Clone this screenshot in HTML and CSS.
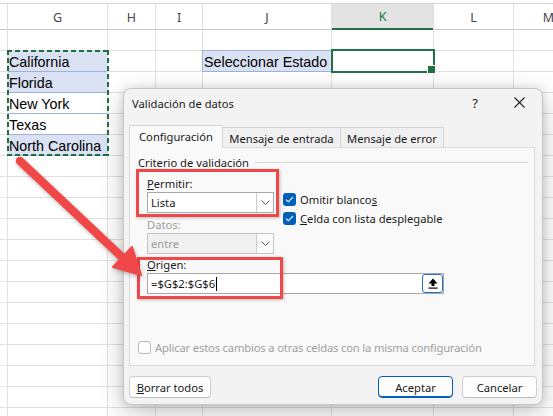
FILE: index.html
```html
<!DOCTYPE html>
<html lang="es">
<head>
<meta charset="utf-8">
<title>Validación de datos</title>
<link rel="stylesheet" href="styles.css">
</head>
<body>
<div class="sheet">
  <div class="col c1"><div class="hd"></div></div>
  <div class="col c2"><div class="hd">G</div></div>
  <div class="col c3"><div class="hd">H</div></div>
  <div class="col c4"><div class="hd">I</div></div>
  <div class="col c5"><div class="hd">J</div></div>
  <div class="col c6"><div class="hd hd-active">K</div></div>
  <div class="col c7"><div class="hd">L</div></div>
  <div class="col c8"><div class="hd hd-edge">M</div></div>

  <div class="cell cg r3 fill">California</div>
  <div class="cell cg r4 fill">Florida</div>
  <div class="cell cg r5">New York</div>
  <div class="cell cg r6">Texas</div>
  <div class="cell cg r7 fill">North Carolina</div>
  <div class="ants"></div>

  <div class="sel-label">Seleccionar Estado</div>
  <div class="active-cell"></div>
</div>

<div class="dialog">
  <div class="titlebar">
    <div class="title">Validación de datos</div>
    <div class="tbtn">?</div>
    <div class="tbtn close">
      <svg width="11" height="11" viewBox="0 0 11 11"><path d="M0.5 0.5 L10.5 10.5 M10.5 0.5 L0.5 10.5" stroke="#222" stroke-width="1.1" fill="none"/></svg>
    </div>
  </div>
  <div class="tabs">
    <div class="tab active t1">Configuración</div>
    <div class="tab t2">Mensaje de entrada</div>
    <div class="tab t3">Mensaje de error</div>
  </div>
  <div class="panel">
    <div class="group-title"><span>Criterio de validación</span><span class="rule"></span></div>
    <div class="form">
      <div class="top-row">
        <div class="left">
          <div class="lbl"><u>P</u>ermitir:</div>
          <div class="select">
            <span>Lista</span>
            <span class="dd"><svg width="9" height="5" viewBox="0 0 9 5"><path d="M0.5 0.5 L4.5 4.5 L8.5 0.5" stroke="#5a5a5a" stroke-width="1" fill="none"/></svg></span>
          </div>
          <div class="lbl dis lbl-gap">Datos:</div>
          <div class="select disabled">
            <span>entre</span>
            <span class="dd"><svg width="9" height="5" viewBox="0 0 9 5"><path d="M0.5 0.5 L4.5 4.5 L8.5 0.5" stroke="#5a5a5a" stroke-width="1" fill="none"/></svg></span>
          </div>
        </div>
        <div class="checks">
          <div class="check"><span class="box on"><svg width="9" height="7" viewBox="0 0 9 7"><path d="M1 3.6 L3.3 5.8 L8 1" stroke="#fff" stroke-width="1.1" fill="none"/></svg></span><span>Omitir blanco<u>s</u></span></div>
          <div class="check"><span class="box on"><svg width="9" height="7" viewBox="0 0 9 7"><path d="M1 3.6 L3.3 5.8 L8 1" stroke="#fff" stroke-width="1.1" fill="none"/></svg></span><span><u>C</u>elda con lista desplegable</span></div>
        </div>
      </div>
      <div class="lbl lbl-gap2"><u>O</u>rigen:</div>
      <div class="refinput">
        <span>=$G$2:$G$6</span><span class="caret"></span>
        <span class="refbtn"><svg width="10" height="11" viewBox="0 0 10 11"><path d="M5 0.5 L9.5 5.5 L6.5 5.5 L6.5 8 L3.5 8 L3.5 5.5 L0.5 5.5 Z" fill="#000"/><rect x="0.5" y="9.5" width="9" height="1.2" fill="#000"/></svg></span>
      </div>
    </div>
    <div class="apply"><span class="box off"></span><span class="apply-text">Aplicar estos cambios a otras celdas con la misma configuración</span></div>
  </div>
  <div class="buttons">
    <div class="btn b-clear"><span><u>B</u>orrar todos</span></div>
    <div class="spacer"></div>
    <div class="btn primary">Aceptar</div>
    <div class="btn b-cancel">Cancelar</div>
  </div>
  <div class="mark mark1"></div>
  <div class="mark mark2"></div>
</div>

<svg class="arrow" width="553" height="416" viewBox="0 0 553 416">
  <line x1="20" y1="161" x2="124" y2="259" stroke="#f04848" stroke-width="8.5" stroke-linecap="round"/>
  <polygon points="141,275 113,267 132,247" fill="#f04848" stroke="#f04848" stroke-width="2" stroke-linejoin="round"/>
</svg>
</body>
</html>
```

FILE: styles.css
```css
* { box-sizing: border-box; }
html, body { margin: 0; padding: 0; }
body {
  width: 553px;
  height: 416px;
  overflow: hidden;
  position: relative;
  background: #fff;
  font-family: "Liberation Sans", Arial, sans-serif;
}

/* ---------- spreadsheet ---------- */
.sheet {
  margin-top: 3px;
  border-top: 1px solid #d4d4d4;
  display: grid;
  grid-template-columns: 8px 100px 48px 47px 129px 102px 80px 40px;
  grid-template-rows: 26px repeat(19, 21px);
  background-image: linear-gradient(to bottom, transparent 20px, #e1e1e1 20px);
  background-size: 100% 21px;
  background-position: 0 26px;
  font-size: 14.3px;
  color: #000;
}
.col { grid-row: 1 / -1; border-right: 1px solid #e1e1e1; }
.c1 { grid-column: 1; }
.c2 { grid-column: 2; }
.c3 { grid-column: 3; }
.c4 { grid-column: 4; }
.c5 { grid-column: 5; }
.c6 { grid-column: 6; }
.c7 { grid-column: 7; }
.c8 { grid-column: 8; border-right: 0; }
.hd {
  height: 26px;
  background: #fff;
  border-bottom: 1px solid #c8c8c8;
  display: flex;
  align-items: center;
  justify-content: center;
  font-family: "Noto Sans", sans-serif;
  font-size: 12.5px;
  color: #444;
  padding-top: 1px;
}
.hd-edge { justify-content: flex-end; padding-right: 0; }
.hd-active {
  background: #e3e3e3;
  border-bottom: 2px solid #217346;
  color: #217346;
}
.cell {
  display: flex;
  align-items: center;
  padding: 1px 0 0 1px;
  margin-right: 1px;
  border-bottom: 1px solid #9db3df;
  white-space: nowrap;
  background: #fff;
}
.cg { grid-column: 2; }
.r3 { grid-row: 3; }
.r4 { grid-row: 4; }
.r5 { grid-row: 5; }
.r6 { grid-row: 6; }
.r7 { grid-row: 7; }
.fill { background: #d9e1f2; }
.ants {
  grid-column: 2;
  grid-row: 3 / 8;
  margin: -1px -1px 0 -1px;
  background:
    repeating-linear-gradient(90deg, #1f6e43 0 5px, transparent 5px 8px) top left / 100% 2px no-repeat,
    repeating-linear-gradient(90deg, #1f6e43 0 5px, transparent 5px 8px) bottom left / 100% 2px no-repeat,
    repeating-linear-gradient(180deg, #1f6e43 0 5px, transparent 5px 8px) top left / 2px 100% no-repeat,
    repeating-linear-gradient(180deg, #1f6e43 0 5px, transparent 5px 8px) top right / 2px 100% no-repeat;
}
.sel-label {
  grid-column: 5;
  grid-row: 3;
  margin: -1px 0 0 -1px;
  border: 1px solid #9db3df;
  background: #d9e1f2;
  display: flex;
  align-items: center;
  padding: 1px 0 0 1px;
  white-space: nowrap;
  overflow: hidden;
}
.active-cell {
  grid-column: 6;
  grid-row: 3;
  margin: -2px -1px -1px -1px;
  border: 2px solid #217346;
  position: relative;
  background: #fff;
}
.active-cell::after {
  content: "";
  position: absolute;
  right: -3px;
  bottom: -3px;
  width: 7px;
  height: 7px;
  background: #217346;
  border: 1px solid #fff;
}

/* ---------- dialog ---------- */
.dialog {
  position: absolute;
  left: 123px;
  top: 88px;
  width: 420px;
  height: 317px;
  border: 1px solid #c6c6c6;
  border-radius: 8px;
  background: #f3f3f3;
  box-shadow: 0 8px 26px rgba(0,0,0,0.22), 0 0 8px rgba(0,0,0,0.12);
  display: flex;
  flex-direction: column;
  font-family: "Noto Sans", sans-serif;
  font-size: 11.2px;
  color: #1a1a1a;
}
.titlebar {
  height: 27px;
  display: flex;
  align-items: center;
  padding-left: 8px;
  padding-right: 1px;
}
.title { flex: 1; padding-top: 1px; }
.tbtn {
  width: 44px;
  height: 27px;
  display: flex;
  align-items: center;
  justify-content: center;
  font-size: 13px;
}
.tabs {
  height: 31px;
  display: flex;
  align-items: flex-end;
  margin-left: 5px;
  position: relative;
  z-index: 2;
}
.tab {
  height: 20px;
  border: 1px solid #d6d6d6;
  border-bottom: 0;
  background: #f0f0f0;
  display: flex;
  align-items: center;
  justify-content: center;
  margin-left: -1px;
  padding-top: 1px;
}
.tab.active {
  height: 23px;
  margin-bottom: -1px;
  margin-left: 0;
  background: #f9f9f9;
  position: relative;
  z-index: 2;
  padding-top: 0;
  padding-bottom: 1px;
}
.t1 { width: 94px; }
.t2 { width: 119px; }
.t3 { width: 104px; }
.panel {
  margin: 0 7px 0 5px;
  height: 219px;
  border: 1px solid #dadada;
  background: #f9f9f9;
  display: flex;
  flex-direction: column;
  position: relative;
}
.group-title {
  display: flex;
  align-items: center;
  gap: 6px;
  height: 14px;
  margin: 7px 6px 0 8px;
}
.rule { flex: 1; height: 1px; background: #d6d6d6; }
.form { padding-left: 17px; margin-top: 8px; }
.lbl { height: 14px; line-height: 14px; white-space: nowrap; }
.lbl-gap { margin-top: 5px; }
.lbl-gap2 { margin-top: 4px; }
.dis { color: #9e9e9e; }
.top-row { display: flex; }
.left { width: 127px; display: flex; flex-direction: column; }
.select {
  height: 21px;
  margin-top: 1px;
  border: 1px solid #a8a8a8;
  background: #fff;
  display: flex;
  align-items: center;
  padding-left: 3px;
}
.select.disabled { background: #f0f0f0; border-color: #c4c4c4; color: #9e9e9e; }
.dd {
  margin-left: auto;
  width: 17px;
  height: 19px;
  border-left: 1px solid #cdcdcd;
  display: flex;
  align-items: center;
  justify-content: center;
  background: #fff;
}
.select.disabled .dd { background: #fbfbfb; }
.checks {
  margin-left: 9px;
  margin-top: 16px;
  display: flex;
  flex-direction: column;
  gap: 6px;
}
.check { display: flex; align-items: center; gap: 4px; height: 13px; white-space: nowrap; }
.box {
  width: 13px;
  height: 13px;
  border-radius: 3px;
  display: flex;
  align-items: center;
  justify-content: center;
  flex: none;
}
.box.on { background: #005fb8; }
.box.off { background: #fdfdfd; border: 1px solid #b8b8b8; }
.refinput {
  width: 297px;
  height: 21px;
  margin-top: 1px;
  border: 1px solid #a8a8a8;
  background: #fff;
  display: flex;
  align-items: center;
  padding-left: 3px;
}
.caret { width: 1px; height: 14px; background: #000; margin-left: 1px; }
.refbtn {
  margin-left: auto;
  width: 21px;
  height: 19px;
  border: 1.5px solid #1f6fd1;
  border-radius: 3px;
  background: #fff;
  display: flex;
  align-items: center;
  justify-content: center;
}
.apply {
  margin: auto 0 10px 8px;
  display: flex;
  align-items: center;
  gap: 4px;
  color: #a0a0a0;
  white-space: nowrap;
}
.apply-text { letter-spacing: -0.15px; }
.buttons {
  display: flex;
  margin: 10px 5px 0 5px;
}
.spacer { flex: 1; }
.btn {
  height: 22px;
  border: 1px solid #d0d0d0;
  border-bottom-color: #bdbdbd;
  border-radius: 4px;
  background: #fdfdfd;
  display: flex;
  align-items: center;
  justify-content: center;
  white-space: nowrap;
}
.b-clear { width: 82px; }
.primary { width: 75px; border: 1px solid #005fb8; box-shadow: inset 0 -1px 0 #005fb8; }
.b-cancel { width: 75px; margin-left: 9px; }

/* annotation rectangles */
.mark {
  position: absolute;
  border: 3px solid #f04848;
  box-shadow: 1px 1px 3px rgba(0,0,0,0.25);
  pointer-events: none;
}
.mark1 { left: 12px; top: 80px; width: 143px; height: 48px; }
.mark2 { left: 13px; top: 168px; width: 146px; height: 42px; }

.arrow {
  position: absolute;
  left: 0;
  top: 0;
  pointer-events: none;
  filter: drop-shadow(1px 2px 2px rgba(0,0,0,0.25));
}
```
